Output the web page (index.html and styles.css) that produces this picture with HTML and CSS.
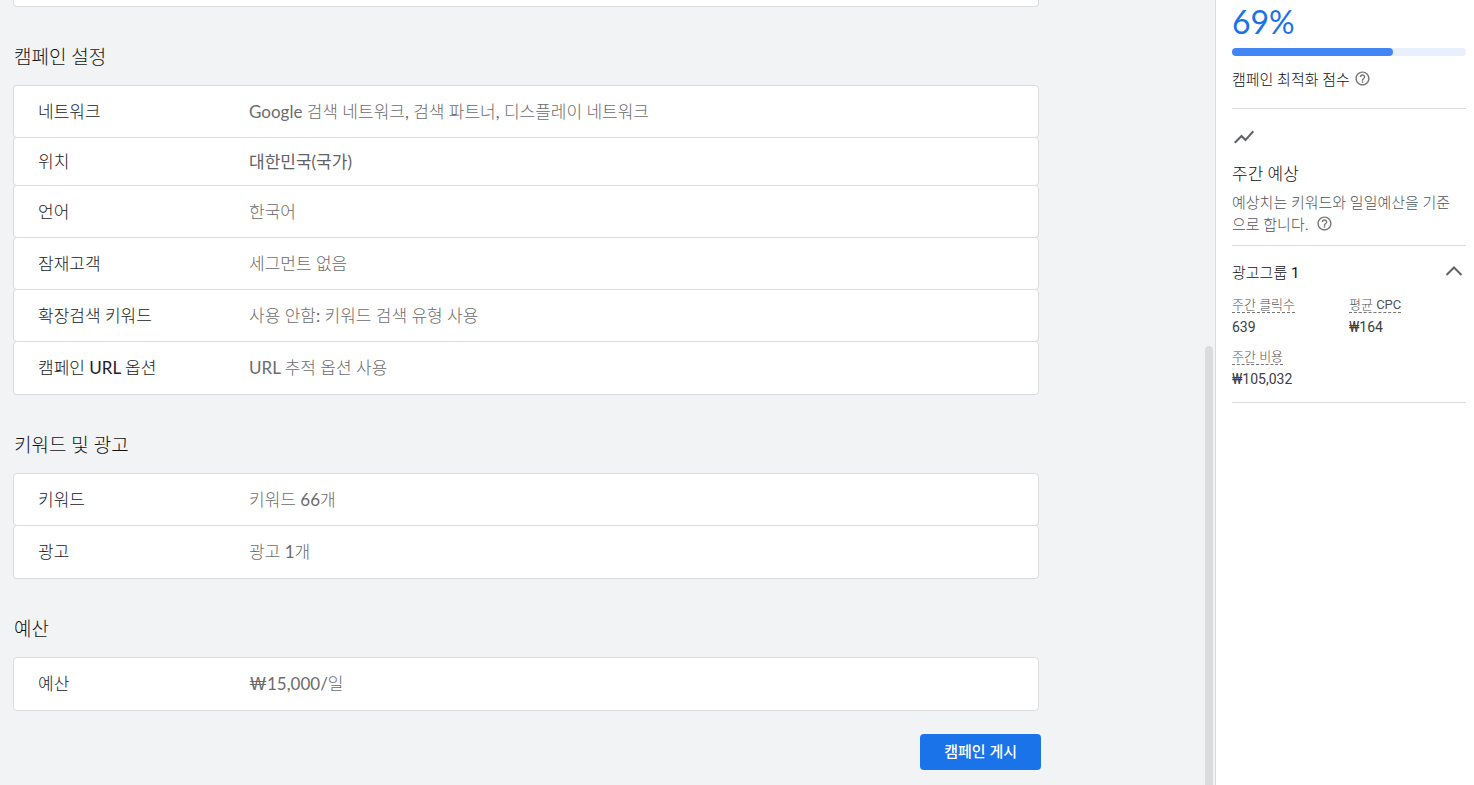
FILE: index.html
```html
<!DOCTYPE html>
<html lang="ko">
<head>
<meta charset="utf-8">
<meta name="viewport" content="width=device-width, initial-scale=1">
<title>캠페인 검토</title>
<link rel="stylesheet" href="styles.css">
</head>
<body>
<div class="app">
  <main class="review">
    <div class="card-tail"></div>

    <section class="group">
      <h2 class="group-title">캠페인 설정</h2>
      <dl class="card">
        <div class="row"><dt>네트워크</dt><dd>Google 검색 네트워크, 검색 파트너, 디스플레이 네트워크</dd></div>
        <div class="row row-compact"><dt>위치</dt><dd class="strong">대한민국(국가)</dd></div>
        <div class="row"><dt>언어</dt><dd>한국어</dd></div>
        <div class="row"><dt>잠재고객</dt><dd>세그먼트 없음</dd></div>
        <div class="row"><dt>확장검색 키워드</dt><dd>사용 안함: 키워드 검색 유형 사용</dd></div>
        <div class="row"><dt>캠페인 URL 옵션</dt><dd>URL 추적 옵션 사용</dd></div>
      </dl>
    </section>

    <section class="group">
      <h2 class="group-title">키워드 및 광고</h2>
      <dl class="card">
        <div class="row"><dt>키워드</dt><dd>키워드 66개</dd></div>
        <div class="row"><dt>광고</dt><dd>광고 1개</dd></div>
      </dl>
    </section>

    <section class="group">
      <h2 class="group-title">예산</h2>
      <dl class="card">
        <div class="row"><dt>예산</dt><dd>₩15,000/일</dd></div>
      </dl>
    </section>

    <div class="actions"><button class="publish" type="button">캠페인 게시</button></div>
    <div class="scroll-thumb"></div>
  </main>

  <aside class="side">
    <section class="score">
      <div class="score-value">69%</div>
      <div class="meter"><div class="meter-fill" style="width:69%"></div></div>
      <div class="score-label">캠페인 최적화 점수
        <button class="help" type="button" aria-label="도움말"><svg viewBox="0 0 24 24"><path d="M11 18h2v-2h-2v2zm1-16C6.480 2 2 6.480 2 12s4.480 10 10 10 10-4.480 10-10S17.520 2 12 2zm0 18c-4.410 0-8-3.590-8-8s3.590-8 8-8 8 3.590 8 8-3.590 8-8 8zm0-14c-2.210 0-4 1.790-4 4h2c0-1.100.9-2 2-2s2 .9 2 2c0 2-3 1.750-3 5h2c0-2.250 3-2.500 3-5 0-2.210-1.790-4-4-4z"/></svg></button>
      </div>
    </section>

    <section class="forecast">
      <svg class="trend" viewBox="0 0 24 24"><path d="M3.500 18.490l6-6.010 4 4L22 6.920l-1.410-1.410-7.090 7.970-4-4L2 16.990z"/></svg>
      <h3 class="forecast-title">주간 예상</h3>
      <p class="forecast-text">예상치는 키워드와 일일예산을 기준으로 합니다. <button class="help" type="button" aria-label="도움말"><svg viewBox="0 0 24 24"><path d="M11 18h2v-2h-2v2zm1-16C6.480 2 2 6.480 2 12s4.480 10 10 10 10-4.480 10-10S17.520 2 12 2zm0 18c-4.410 0-8-3.590-8-8s3.590-8 8-8 8 3.590 8 8-3.590 8-8 8zm0-14c-2.210 0-4 1.790-4 4h2c0-1.100.9-2 2-2s2 .9 2 2c0 2-3 1.750-3 5h2c0-2.250 3-2.500 3-5 0-2.210-1.790-4-4-4z"/></svg></button></p>
    </section>

    <section class="adgroup">
      <button class="adgroup-head" type="button" aria-expanded="true">광고그룹 1
        <svg class="chevron" viewBox="0 0 24 24"><path d="M4.500 16l7.500-7.500 7.500 7.500" fill="none" stroke="currentColor" stroke-width="2"/></svg>
      </button>
      <dl class="metrics">
        <div><dt><span class="term">주간 클릭수</span></dt><dd>639</dd></div>
        <div><dt><span class="term">평균 CPC</span></dt><dd>₩164</dd></div>
        <div><dt><span class="term">주간 비용</span></dt><dd>₩105,032</dd></div>
      </dl>
    </section>
  </aside>
</div>
</body>
</html>
```
FILE: styles.css
```css
* { box-sizing: border-box; }
body, h2, h3, p, dl, dd { margin: 0; }
body {
  background: #f1f3f4;
  color: #111214;
  font-family: Lato, "Noto Sans CJK KR Light", "Noto Sans CJK KR", sans-serif;
  font-size: 17px;
  font-weight: 400;
}
button {
  border: 0;
  padding: 0;
  background: none;
  font: inherit;
  color: inherit;
  cursor: pointer;
}
.app {
  display: flex;
  height: 100vh;
  overflow: hidden;
}

/* Review column */
.review {
  position: relative;
  flex: 1;
  min-width: 0;
  padding: 0 176px 0 13px;
  overflow: hidden;
}
.card-tail {
  height: 7px;
  border: 1px solid #dadce0;
  border-top: 0;
  border-radius: 0 0 4px 4px;
  background: #fff;
}
.group-title {
  padding: 36px 1px 14px;
  font-size: 19px;
  line-height: 28px;
  font-weight: 400;
}
.row {
  display: flex;
  align-items: center;
  min-height: 53px;
  padding: 0 24px;
  background: #fff;
  border: 1px solid #dadce0;
  border-radius: 4px;
  line-height: 24px;
}
.row + .row { margin-top: -1px; }
.row-compact { min-height: 49px; }
.row:last-child { min-height: 54px; }
.row dt {
  width: 211px;
  flex: none;
  color: #202124;
}
.row dd { color: #6c6c6c; }
.row .strong {
  color: #5f6368;
  font-family: Lato, "Noto Sans CJK KR", sans-serif;
}
.actions {
  display: flex;
  justify-content: flex-end;
  margin: 23px -2px 0 0;
}
.publish {
  height: 36px;
  padding: 0 24px 4px;
  border-radius: 4px;
  background: #1a73e8;
  color: #fff;
  font-family: Roboto, "Noto Sans CJK KR", sans-serif;
  font-size: 15px;
  font-weight: 500;
}
.scroll-thumb {
  position: absolute;
  top: 346px;
  right: 2px;
  bottom: -8px;
  width: 8px;
  border-radius: 4px;
  background: #dadce0;
}

/* Side panel */
.side {
  width: 259px;
  flex: none;
  padding: 0 8px 0 16px;
  border-left: 1px solid #dadce0;
  background: #fff;
  font-family: Roboto, "Noto Sans CJK KR Light", "Noto Sans CJK KR", sans-serif;
}
.side section { border-bottom: 1px solid #dadce0; }
.score { height: 109px; }
.score-value {
  padding-top: 2px;
  font-family: Lato, sans-serif;
  font-size: 32px;
  line-height: 40px;
  color: #1a73e8;
}
.meter {
  height: 8px;
  margin: 6px 0 14px;
  border-radius: 4px;
  background: #e8f0fe;
}
.meter-fill {
  height: 8px;
  border-radius: 4px;
  background: #4285f4;
}
.score-label {
  font-size: 15px;
  line-height: 20px;
}
.help {
  width: 17px;
  height: 17px;
  color: #757575;
  vertical-align: -2px;
}
.help svg {
  display: block;
  width: 17px;
  height: 17px;
  fill: currentColor;
}
.forecast { padding: 16px 0 9px; }
.trend {
  display: block;
  width: 24px;
  height: 24px;
  fill: #5f6368;
}
.forecast-title {
  margin: 13px 0 6px;
  font-size: 17px;
  font-weight: 400;
  line-height: 24px;
}
.forecast-text {
  padding-right: 8px;
  color: #505459;
  font-size: 15px;
  line-height: 22px;
  word-break: break-all;
}
.forecast-text .help { margin-left: 4px; }
.adgroup { padding: 12px 0 12px; }
.adgroup-head {
  display: flex;
  justify-content: space-between;
  align-items: center;
  width: 100%;
  height: 26px;
  font-size: 15px;
  text-align: left;
}
.chevron {
  width: 24px;
  height: 24px;
  color: #5f6368;
}
.metrics {
  display: grid;
  grid-template-columns: 1fr 1fr;
  gap: 8px 0;
  padding-top: 10px;
  color: #3c4043;
  font-size: 14px;
  line-height: 22px;
}
.metrics dt {
  color: #505459;
  font-size: 13px;
}
.term {
  display: inline-block;
  line-height: 14px;
  border-bottom: 1px dashed #757575;
}
```
